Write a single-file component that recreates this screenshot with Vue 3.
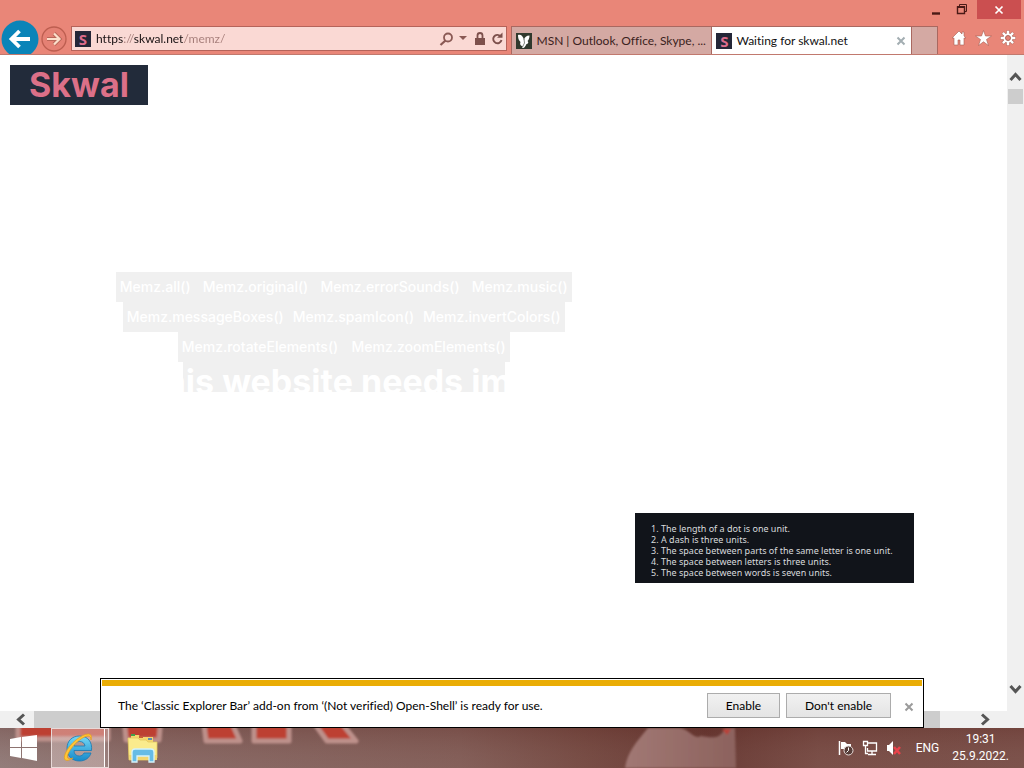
<script setup>
import { ref } from 'vue'

const address = ref('https://skwal.net/memz/')
const payloadRows = [
  { id: 'first', items: ['Memz.all()', 'Memz.original()', 'Memz.errorSounds()', 'Memz.music()'] },
  { id: 'second', items: ['Memz.messageBoxes()', 'Memz.spamIcon()', 'Memz.invertColors()'] },
  { id: 'third', items: ['Memz.rotateElements()', 'Memz.zoomElements()'] },
  { id: 'fourth', items: [] }
]
const rules = [
  'The length of a dot is one unit.',
  'A dash is three units.',
  'The space between parts of the same letter is one unit.',
  'The space between letters is three units.',
  'The space between words is seven units.'
]
</script>

<template>
  <div class="desktop">
    <header class="chrome">
      <div class="caption">
        <button class="cap" aria-label="Minimize"><svg width="10" height="12"><path d="M1 9.5h8" stroke="#4a1a16" stroke-width="2.4" /></svg></button>
        <button class="cap" aria-label="Restore"><svg width="12" height="12" fill="none" stroke="#4a1a16"><path d="M3.5 2V.5h7v7H9" /><path d="M1.5 3h7v6.500h-7z" stroke-width="1.4" /><path d="M1 3h8" stroke-width="2" /></svg></button>
        <button class="cap close" aria-label="Close"><svg width="10" height="10"><path d="M1.500 1.500l7 7M8.500 1.500l-7 7" stroke="#fff" stroke-width="1.700" /></svg></button>
      </div>
      <div class="navbar">
        <button class="back" aria-label="Back">
          <svg width="38" height="38" viewBox="0 0 38 38"><circle cx="19" cy="19" r="18.500" fill="#0a84b8" /><path d="M29 19H11M18.500 11l-8 8 8 8" fill="none" stroke="#fff" stroke-width="3.800" /></svg>
        </button>
        <button class="forward" aria-label="Forward">
          <svg width="28" height="28" viewBox="0 0 28 28"><circle cx="14" cy="14" r="12" fill="#e58174" stroke="#bd5e50" stroke-width="1.300" /><path d="M7 14h12M14 8.500l5.500 5.500-5.500 5.500" fill="none" stroke="#b96658" stroke-width="4" /><path d="M7 14h12M14 8.500l5.500 5.500-5.500 5.500" fill="none" stroke="#fce0cc" stroke-width="2.200" /></svg>
        </button>
        <div class="address">
          <span class="favicon">S</span>
          <input v-model="address" aria-label="Address" spellcheck="false" />
          <button aria-label="Search"><svg width="15" height="16" fill="none" stroke="#8a5954"><circle cx="9" cy="6.500" r="4" stroke-width="1.800" /><path d="M6.500 9.500L1.500 14" stroke-width="2.300" /></svg></button>
          <button aria-label="Show address list"><svg width="8" height="5"><path d="M0 0h8L4 4z" fill="#8a5954" /></svg></button>
          <button class="lock" aria-label="Security report"><svg width="12" height="14"><path d="M3.500 7V3.500a2.500 2.500 0 0 1 5 0V7" fill="none" stroke="#7d504c" stroke-width="1.800" /><path d="M1 6h10v7H1z" fill="#7d504c" /></svg></button>
          <button class="refresh" aria-label="Refresh"><svg width="13" height="14"><path d="M9.500 4.200A4.200 4.200 0 1 0 10.500 8" fill="none" stroke="#7d504c" stroke-width="1.900" /><path d="M6 5.800h5.500V.5z" fill="#7d504c" /></svg></button>
        </div>
        <nav class="tabs" aria-label="Tabs">
          <button class="tab">
            <svg class="msn" width="16" height="16"><path d="M0 0h16v16H0z" fill="#30392d" /><path d="M2 2c3-1 5 1 6 5 .5-3 2.500-4.500 5.500-4.500 0 3-1 4.500-2 5.500 1.500 1 .5 3-1 3-1 2-2 4-3.500 4-1 0-1-1-.5-2C4.500 13 3.500 11 4.500 9 2.500 7 2 5 2 2z" fill="#fff" /><path d="M8 6l.5 4-2 4" fill="none" stroke="#30392d" stroke-width=".6" /></svg>
            <span class="title">MSN | Outlook, Office, Skype, ...</span>
          </button>
          <div class="tab active">
            <span class="favicon">S</span><span class="title">Waiting for skwal.net</span>
            <button class="tabclose" aria-label="Close tab"><svg width="10" height="10"><path d="M1.500 1.500l7 7M8.500 1.500l-7 7" stroke="#a3aeb2" stroke-width="2" /></svg></button>
          </div>
          <button class="newtab" aria-label="New tab"></button>
        </nav>
        <div class="tools">
          <button aria-label="Home"><svg width="16" height="16"><path d="M8 1L1 8h2v7h4v-5h2v5h4V8h2l-2-2V2h-2v2z" fill="#fff" stroke="#a65f54" stroke-width=".6" /></svg></button>
          <button aria-label="Favorites"><svg width="17" height="16"><path d="M8.500.5l2 5.500h6l-5 3.500 2 6-5-3.700-5 3.700 2-6-5-3.500h6z" fill="#fff" stroke="#a65f54" stroke-width=".6" /></svg></button>
          <button aria-label="Tools"><svg width="16" height="16" viewBox="-8 -8 16 16"><g stroke="#a65f54" stroke-width="3.400"><path d="M0-7.500v15M-7.500 0h15M-5.300-5.300L5.300 5.300M5.300-5.300L-5.300 5.300" /></g><g stroke="#fff" stroke-width="2.500"><path d="M0-7.300v14.600M-7.300 0h14.600M-5.100-5.100L5.100 5.100M5.100-5.100L-5.100 5.100" /></g><circle r="4.500" fill="#fff" /><circle r="2.500" fill="#e58376" stroke="#a65f54" stroke-width=".9" /></svg></button>
        </div>
      </div>
    </header>

    <main class="viewport">
      <section class="page">
        <a class="logo" href="#">Skwal</a>
        <div class="payloads">
          <div v-for="row in payloadRows" :key="row.id" class="row" :class="row.id">
            <button v-for="item in row.items" :key="item">{{ item }}</button>
          </div>
          <h1>This website needs im</h1>
        </div>
        <ol class="rules"><li v-for="rule in rules" :key="rule">{{ rule }}</li></ol>
      </section>
      <div class="vscroll">
        <button class="arrow up" aria-label="Scroll up"><svg width="13" height="10"><path d="M1.500 8l5-5.500 5 5.500" /></svg></button>
        <div class="vthumb"></div>
        <button class="arrow down" aria-label="Scroll down"><svg width="13" height="10"><path d="M1.500 2l5 5.500 5-5.500" /></svg></button>
      </div>
      <div class="hscroll">
        <button class="arrow side left" aria-label="Scroll left"><svg width="10" height="13"><path d="M8 1.500L2.500 6.500l5.500 5" /></svg></button>
        <div class="hthumb"></div>
        <button class="arrow side" aria-label="Scroll right"><svg width="10" height="13"><path d="M2 1.500l5.500 5-5.500 5" /></svg></button>
      </div>
      <div class="corner"></div>
      <aside class="notice" role="alert">
        <p>The ‘Classic Explorer Bar’ add-on from ‘(Not verified) Open-Shell’ is ready for use.</p>
        <button class="action">Enable</button>
        <button class="action wide">Don't enable</button>
        <button class="dismiss" aria-label="Dismiss"><svg width="10" height="10"><path d="M1.500 1.500l7 7M8.500 1.500l-7 7" stroke="#9b9b9b" stroke-width="2" /></svg></button>
      </aside>
    </main>

    <footer class="taskbar">
      <svg class="wallpaper" viewBox="0 0 1024 40" preserveAspectRatio="none" aria-hidden="true">
        <defs>
          <linearGradient id="base"><stop offset="0" stop-color="#94807e" /><stop offset=".15" stop-color="#8a6c68" /><stop offset=".45" stop-color="#84605a" /><stop offset=".57" stop-color="#764b43" /><stop offset=".69" stop-color="#673832" /><stop offset=".8" stop-color="#794d46" /><stop offset="1" stop-color="#7b514a" /></linearGradient>
          <linearGradient id="shade" x2="0" y2="1"><stop offset="0" stop-color="#5e2923" stop-opacity=".3" /><stop offset="1" stop-color="#8c6660" stop-opacity=".1" /></linearGradient>
          <linearGradient id="hand"><stop offset="0" stop-color="#a17874" /><stop offset="1" stop-color="#8c625d" /></linearGradient>
          <filter id="soft"><feGaussianBlur stdDeviation="1" /></filter>
        </defs>
        <path d="M0 0h1024v40H0z" fill="url(#base)" /><path d="M0 0h1024v40H0z" fill="url(#shade)" />
        <g filter="url(#soft)">
          <path d="M18-12h90v23H18zM124-12h37l-2 24h-33zM203-12h26l11 25h-34zM254-12h35v25h-35zM309-12h27l20 25h-29z" fill="#bd4131" stroke="#bd918b" stroke-width="5" stroke-linejoin="round" />
          <path d="M625 40c2-15 12-27 23-40h32c10 2 14 12 21 8 8 1 19 5 24-8h10l1 40z" fill="url(#hand)" />
          <path d="M722 1h9l-4 6z" fill="#ba4137" />
        </g>
      </svg>
      <button class="start" aria-label="Start"><svg width="27" height="26"><path d="M0 4l11-2v10H0zM12 2l15-2v12H12zM0 13h11v10L0 21zM12 13h15v13l-15-3z" fill="#fff" /></svg></button>
      <button class="running" aria-label="Internet Explorer">
        <svg width="34" height="34" viewBox="0 0 34 34"><defs><linearGradient id="ieblue" x2="0" y2="1"><stop offset="0" stop-color="#75d9f7" /><stop offset="1" stop-color="#1689c9" /></linearGradient></defs><path d="M18.500 5C11 5 6 10 6 17.500S11 30 18.500 30c5.500 0 10-3 11.500-8h-7c-1 2-2.500 3-4.500 3-3.500 0-5.500-2-5.500-5.500h17.500C31.500 11 27 5 18.500 5zM13 15c.5-3 2.500-4.500 5.500-4.500S23.500 12 24 15z" fill="url(#ieblue)" stroke="#1678b4" stroke-width=".8" /><path d="M30 9c1-4 0-6-3-6C21 3 9 12 4.500 22c-3 7 0 10 7.500 5-5 2-7 0-4.500-5C12 13 23 4.500 27.500 5c1.500.2 2.500 1.500 2.500 4z" fill="#ffc536" stroke="#e79c17" stroke-width=".7" /></svg>
      </button>
      <button class="explorer" aria-label="File Explorer">
        <svg width="34" height="32" viewBox="0 0 34 32"><path d="M5 3h8l1 2h13v5H5z" fill="#f4d66d" /><path d="M5 2h4v2H5z" fill="#43a04d" /><path d="M13 4h4v2h-4z" fill="#c65d38" /><path d="M22 6h4v2h-4z" fill="#5d8fae" /><path d="M2 6h10l2 2h6l2 2h9v16l-2 2H3z" fill="#faeb8d" stroke="#e3c860" stroke-width=".8" /><path d="M3 23h28v5H4z" fill="#f3d66d" /><path d="M6 30V20c0-2 1-3 3-3h16c2 0 3 1 3 3v10h-5v-6H11v6z" fill="#66bce5" stroke="#d5f3fb" stroke-width="1.300" /></svg>
      </button>
      <div class="tray">
        <button aria-label="Action Center"><svg width="16" height="16"><path d="M1.500 1v14" stroke="#fff" stroke-width="1.500" /><path d="M3 2h4l2 2h4v5H3z" fill="#fff" /><circle cx="10.500" cy="10.500" r="4.500" fill="#563d38" stroke="#e8dedd" /><path d="M10.500 7.500v3l-2 2" fill="none" stroke="#fff" /></svg></button>
        <button aria-label="Network"><svg width="16" height="16" fill="none" stroke="#fff" stroke-width="1.300"><path d="M6 3h8.500v8H5.500V8M10 11v3M6 14.500h8M1.500 1.500h4v4h-4zM3.500 6v7.500H6" /></svg></button>
        <button aria-label="Volume muted"><svg width="16" height="16"><path d="M1 5h2l4-4v14l-4-4H1z" fill="#fff" /><path d="M8 7l6 7M14 7l-6 7" stroke="#e9434b" stroke-width="2.500" /></svg></button>
        <button class="lang">ENG</button>
        <button class="clock"><span>19:31</span><span>25.9.2022.</span></button>
      </div>
    </footer>
  </div>
</template>

<style>
body { margin: 0; }
</style>

<style scoped>
.desktop { height: 100vh; display: flex; flex-direction: column; overflow: hidden; background: #fff; color: #111; font-family: Lato, "Open Sans", sans-serif; font-size: 12px; font-variant-ligatures: none; }
.desktop * { box-sizing: border-box; }
button { display: flex; align-items: center; justify-content: center; padding: 0; border: 0; background: none; color: inherit; font: inherit; font-variant-ligatures: none; }
svg { display: block; flex: none; }
.chrome { flex: none; background: #e98678; border-bottom: 1px solid #c1796e; }
.caption { height: 20px; display: flex; justify-content: flex-end; padding-right: 3px; }
.cap { width: 26px; }
.cap.close { width: 44px; height: 19px; margin-left: 2px; background: #cb4f50; }
.navbar { height: 34px; display: flex; align-items: flex-end; }
.back { width: 38px; height: 34px; margin-left: 1px; overflow: hidden; align-items: flex-start; }
.forward { width: 28px; height: 30px; margin: 0 3px 0 1px; }
.address { flex: 432; min-width: 0; height: 25px; margin: 0 4px 3px 0; padding: 0 2px 0 3px; display: flex; align-items: center; background: #fad9d4; border: 1px solid #b5635a; }
.favicon { flex: none; width: 16px; height: 16px; background: #242738; color: #dc6c8c; font: bold 15px/16px "Open Sans", sans-serif; text-align: center; }
.address input { flex: 1; min-width: 0; height: 20px; margin-left: 5px; padding: 0; border: 0; outline: 0; font: inherit; color: transparent; background: linear-gradient(90deg, #171011 27px, #a57d79 27px 38px, #171011 38px 88px, #a57d79 88px) text; -webkit-background-clip: text; }
.address button { margin-left: 5px; }
.address .lock { margin-left: 7px; }
.tabs { flex: 427; min-width: 0; display: flex; height: 28px; border: 1px solid #a96860; border-bottom: 0; background: #d4a9a3; }
.tab { flex: 200; min-width: 0; display: flex; align-items: center; justify-content: flex-start; padding: 0 5px 0 4px; border-right: 1px solid #a96860; color: #3b2220; }
.tab.active { background: #fff; color: #111; }
.title { flex: 1; margin-left: 4px; text-align: left; white-space: nowrap; }
.newtab { flex: 26; }
.tools { width: 86px; height: 32px; display: flex; align-items: center; justify-content: flex-end; gap: 8px; padding-right: 8px; }
.viewport { flex: 1; min-height: 0; position: relative; display: grid; grid-template: minmax(0, 1fr) 17px / minmax(0, 1fr) 17px; }
.page { position: relative; overflow: hidden; padding: 10px; }
.logo { display: block; width: 138px; height: 40px; background: #222b3a; color: #dc7088; font: bold 34px/39px Inter, sans-serif; text-align: center; text-decoration: none; }
.payloads { width: 66%; margin: 167px 0 0 8px; display: flex; flex-direction: column; align-items: center; color: #fff; }
.row { height: 30px; display: flex; justify-content: space-between; padding: 0 4px; background: #f0f0f0; font: 500 14px/30px Inter, sans-serif; white-space: nowrap; }
.first { width: 456px; }
.second { width: 442px; }
.third { width: 332px; }
.fourth { width: 322px; }
h1 { align-self: flex-start; margin: -28px 0 0 124px; font: bold 34px/36px Inter, sans-serif; white-space: nowrap; }
.rules { position: absolute; top: 458px; right: 93px; width: 279px; margin: 0; padding: 10px 0 5px 26px; background: #11141a; color: #d8dadd; font: 9px/11px "Noto Sans", sans-serif; }
.vscroll { display: flex; flex-direction: column; background: #f0f0f0; }
.hscroll { display: flex; padding-right: 5px; background: #f0f0f0; }
.vthumb { height: 15px; margin: 0 1px; background: #cdcdcd; }
.hthumb { flex: 1; margin-right: 28px; background: #cdcdcd; }
.arrow svg { fill: none; stroke: #555; stroke-width: 3; }
.up { height: 34px; padding-top: 9px; }
.down { height: 34px; margin-top: auto; padding-bottom: 10px; }
.side { width: 34px; }
.left { padding-left: 8px; }
.corner { background: #f0f0f0; }
.notice { position: absolute; bottom: 0; left: 100px; right: 100px; height: 50px; padding: 5px 9px 0 17px; display: flex; align-items: center; background: #fff; border: 1px solid #000; }
.notice::before { content: ""; position: absolute; top: 1px; left: 1px; right: 1px; height: 6px; background: #eaad05; }
.notice p { flex: 1; margin: 0; white-space: nowrap; color: #000; }
.action { width: 73px; height: 25px; border: 1px solid #acacac; background: linear-gradient(#f1f1f1, #e4e4e4); color: #000; }
.action.wide { width: 105px; margin-left: 6px; }
.dismiss { margin-left: 13px; padding-top: 2px; }
.taskbar { flex: none; height: 40px; position: relative; display: flex; color: #fff; }
.wallpaper { position: absolute; inset: 0; width: 100%; height: 100%; }
.start, .running, .explorer, .tray { position: relative; }
.start { width: 47px; }
.running { width: 58px; margin-left: 4px; padding-right: 4px; border: 1px solid #e8d9d8; background: linear-gradient(90deg, #e5d2d070 52px, #fff 52px 53px, #ad989666 53px); }
.explorer { width: 68px; }
.tray { margin-left: auto; display: flex; align-items: center; padding-right: 15px; gap: 8px; font-family: Roboto, sans-serif; }
.lang { margin-left: 6px; }
.clock { flex-direction: column; margin-left: 5px; line-height: 17px; }
</style>
